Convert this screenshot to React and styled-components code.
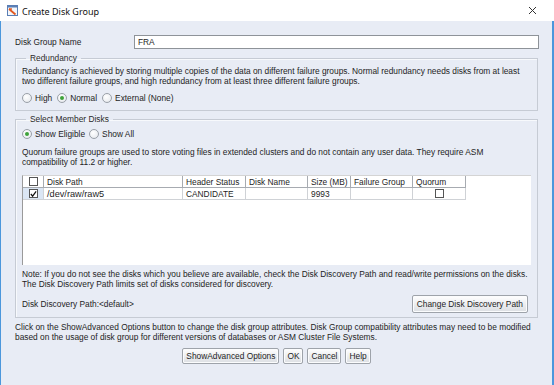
import React from "react";
import styled, { createGlobalStyle } from "styled-components";

const Global = createGlobalStyle`
  html, body { margin: 0; padding: 0; background: #ffffff; }
  body { font-family: "Liberation Sans", Arial, sans-serif; }
  * { box-sizing: border-box; }
`;

const Window = styled.div`
  width: 554px;
  height: 385px;
  display: flex;
  flex-direction: column;
  background: #ffffff;
  overflow: hidden;
`;

const TitleBar = styled.div`
  height: 21px;
  flex: none;
  display: flex;
  align-items: center;
  padding: 0 0 0 7px;
  background: #ffffff;
  color: #111;
  gap: 4px;
`;

const TitleText = styled.span`
  flex: 1;
  font-family: "Noto Sans", "Liberation Sans", sans-serif;
  font-size: 9px;
  padding-top: 1px;
`;

const CloseBtn = styled.span`
  width: 26px;
  display: flex;
  justify-content: flex-start;
  align-items: center;
`;

const Body = styled.div`
  flex: 1;
  background: #e8ecf5;
  border-left: 1px solid #4c97dc;
  border-right: 2px solid #4c97dc;
  padding: 14px 14px 0 14px;
  font-size: 8.35px;
  color: #1e1e1e;
  display: flex;
  flex-direction: column;
`;

const NameRow = styled.div`
  display: flex;
  align-items: center;
  height: 14px;
`;

const Label = styled.span`
  width: 119px;
  flex: none;
`;

const TextInput = styled.div`
  flex: 1;
  height: 14px;
  margin-right: -1px;
  background: #ffffff;
  border: 1px solid #8e9399;
  display: flex;
  align-items: center;
  padding-left: 3px;
`;

const Group = styled.fieldset`
  margin: ${p => p.$top}px 0 0 0;
  padding: 0 6px ${p => p.$bottom}px 6px;
  border: 1px solid #c6cbd4;
  box-shadow: inset 1px 1px 0 #f7f9fc;
  min-width: 0;
`;

const Legend = styled.legend`
  margin-left: 4px;
  padding: 0 4px;
  line-height: 10px;
  color: #2a2a2a;
`;

const Para = styled.div`
  line-height: 10px;
  margin-top: ${p => p.$top}px;
  white-space: nowrap;
`;

const RadioRow = styled.div`
  display: flex;
  align-items: center;
  height: 12px;
  margin-top: ${p => p.$top}px;
  gap: 3px;
`;

const RadioItem = styled.label`
  display: flex;
  align-items: center;
  gap: 3px;
  margin-left: ${p => p.$left || 0}px;
`;

const RadioCircle = styled.span`
  width: 10px;
  height: 10px;
  border-radius: 50%;
  border: 1px solid #9aa0a8;
  background: radial-gradient(circle at 40% 35%, #ffffff 0%, #eef0f3 60%, #d9dde3 100%);
  display: flex;
  align-items: center;
  justify-content: center;
  &::after {
    content: "";
    width: 4px;
    height: 4px;
    border-radius: 50%;
    background: ${p => (p.$on ? "#3ea23a" : "transparent")};
  }
`;

const TableBox = styled.div`
  margin-top: 8px;
  height: 90px;
  background: #ffffff;
  border-left: 1px solid #9a9a9a;
  border-top: 1px solid #d4d4d4;
`;

const Row = styled.div`
  display: flex;
  height: 12px;
`;

const Cell = styled.div`
  width: ${p => p.$w}px;
  flex: none;
  height: 12px;
  line-height: 12px;
  padding-left: ${p => (p.$center ? 0 : 3)}px;
  border-right: 1px solid ${p => (p.$head ? "#a7abb1" : "#cfd2d6")};
  border-bottom: 1px solid ${p => (p.$head ? "#a7abb1" : "#cfd2d6")};
  background: ${p => (p.$sel ? "#dbe6f4" : "#ffffff")};
  display: flex;
  align-items: center;
  justify-content: ${p => (p.$center ? "center" : "flex-start")};
  white-space: nowrap;
  overflow: hidden;
  font-size: ${p => (p.$big ? 9.2 : 8.35)}px;
`;

const Check = styled.span`
  width: 9px;
  height: 9px;
  border: 1px solid #555;
  background: #fff;
  display: flex;
  align-items: center;
  justify-content: center;
`;

const FootRow = styled.div`
  display: flex;
  align-items: center;
  justify-content: space-between;
  margin-top: ${p => p.$top}px;
  padding-right: 3px;
`;

const Button = styled.button`
  height: ${p => p.$h || 16}px;
  padding: 0 ${p => p.$px || 3}px;
  font-family: "Liberation Sans", Arial, sans-serif;
  font-size: 8.35px;
  color: #1e1e1e;
  border: 1px solid #9ea3aa;
  border-radius: 2px;
  background: linear-gradient(#ffffff, #e9ebee 60%, #dcdfe3);
  box-shadow: inset 0 0 0 1px #fbfcfd;
  cursor: default;
`;

const ButtonBar = styled.div`
  display: flex;
  justify-content: center;
  gap: 4px;
  margin-top: 6px;
`;

const OracleIcon = () => (
  <svg width="11" height="11" viewBox="0 0 11 11">
    <rect x="0.5" y="0.5" width="10" height="10" fill="#f4f6fa" stroke="#5a7fb5" />
    <rect x="0.5" y="0.5" width="10" height="2" fill="#5a7fb5" />
    <path d="M2 4 L8.5 9.5" stroke="#e2571e" strokeWidth="1.8" />
    <path d="M2 4 L5 4" stroke="#e2571e" strokeWidth="1.4" />
  </svg>
);

const CloseIcon = () => (
  <svg width="9" height="9" viewBox="0 0 9 9">
    <path d="M1 1 L8 8 M8 1 L1 8" stroke="#333" strokeWidth="1" />
  </svg>
);

const Tick = () => (
  <svg width="8" height="8" viewBox="0 0 8 8">
    <path d="M1 4 L3 6.5 L7 1" stroke="#111" strokeWidth="1.4" fill="none" />
  </svg>
);

const cols = [
  { w: 21, t: "" },
  { w: 139, t: "Disk Path" },
  { w: 63, t: "Header Status" },
  { w: 62, t: "Disk Name" },
  { w: 43, t: "Size (MB)" },
  { w: 62, t: "Failure Group" },
  { w: 53, t: "Quorum" },
];

export default function App() {
  return (
    <>
      <Global />
      <Window>
        <TitleBar>
          <OracleIcon />
          <TitleText>Create Disk Group</TitleText>
          <CloseBtn>
            <CloseIcon />
          </CloseBtn>
        </TitleBar>
        <Body>
          <NameRow>
            <Label>Disk Group Name</Label>
            <TextInput>FRA</TextInput>
          </NameRow>

          <Group $top={4} $bottom={6}>
            <Legend>Redundancy</Legend>
            <Para $top={3}>
              Redundancy is achieved by storing multiple copies of the data on different failure groups. Normal redundancy needs disks from at least
              <br />
              two different failure groups, and high redundancy from at least three different failure groups.
            </Para>
            <RadioRow $top={6}>
              <RadioItem>
                <RadioCircle />
                High
              </RadioItem>
              <RadioItem $left={2}>
                <RadioCircle $on />
                Normal
              </RadioItem>
              <RadioItem $left={2}>
                <RadioCircle />
                External (None)
              </RadioItem>
            </RadioRow>
          </Group>

          <Group $top={3} $bottom={4}>
            <Legend>Select Member Disks</Legend>
            <RadioRow $top={4}>
              <RadioItem>
                <RadioCircle $on />
                Show Eligible
              </RadioItem>
              <RadioItem $left={1}>
                <RadioCircle />
                Show All
              </RadioItem>
            </RadioRow>
            <Para $top={7}>
              Quorum failure groups are used to store voting files in extended clusters and do not contain any user data. They require ASM
              <br />
              compatibility of 11.2 or higher.
            </Para>
            <TableBox>
              <Row>
                {cols.map((c, i) => (
                  <Cell key={i} $w={c.w} $head $center={i === 0}>
                    {i === 0 ? <Check /> : c.t}
                  </Cell>
                ))}
              </Row>
              <Row>
                <Cell $w={21} $center $sel>
                  <Check>
                    <Tick />
                  </Check>
                </Cell>
                <Cell $w={139} $big>/dev/raw/raw5</Cell>
                <Cell $w={63}>CANDIDATE</Cell>
                <Cell $w={62}></Cell>
                <Cell $w={43}>9993</Cell>
                <Cell $w={62}></Cell>
                <Cell $w={53} $center>
                  <Check />
                </Cell>
              </Row>
            </TableBox>
            <Para $top={4}>
              Note: If you do not see the disks which you believe are available, check the Disk Discovery Path and read/write permissions on the disks.
              <br />
              The Disk Discovery Path limits set of disks considered for discovery.
            </Para>
            <FootRow $top={6}>
              <span>Disk Discovery Path:&lt;default&gt;</span>
              <Button $h={18} $px={4}>Change Disk Discovery Path</Button>
            </FootRow>
          </Group>

          <Para $top={4}>
            Click on the ShowAdvanced Options button to change the disk group attributes. Disk Group compatibility attributes may need to be modified
            <br />
            based on the usage of disk group for different versions of databases or ASM Cluster File Systems.
          </Para>
          <ButtonBar>
            <Button>ShowAdvanced Options</Button>
            <Button>OK</Button>
            <Button>Cancel</Button>
            <Button>Help</Button>
          </ButtonBar>
        </Body>
      </Window>
    </>
  );
}
